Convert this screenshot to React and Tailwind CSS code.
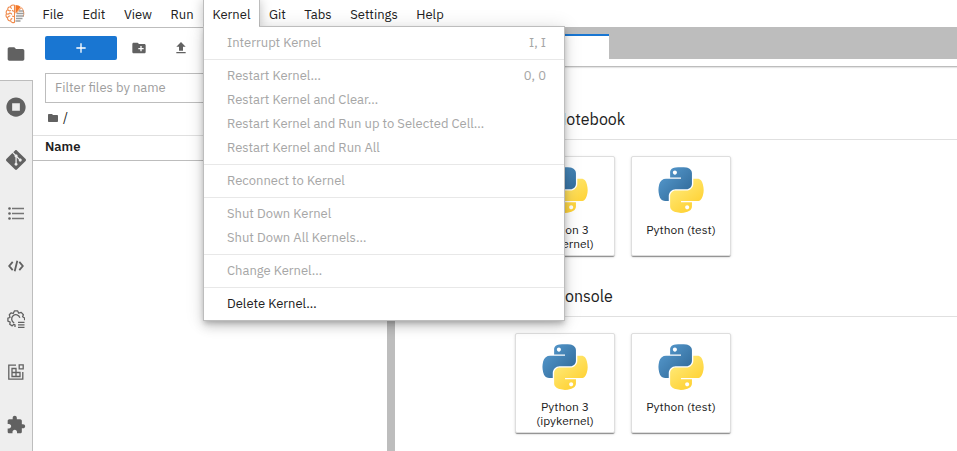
import React from "react";
import { SiGit } from "react-icons/si";

const MENU_ITEMS = [
  { label: "File", width: "w-10" },
  { label: "Edit", width: "w-[42px]" },
  { label: "View", width: "w-[46px]" },
  { label: "Run", width: "w-[42px]" },
  { label: "Kernel", width: "w-[57px]" },
  { label: "Git", width: "w-[35px]" },
  { label: "Tabs", width: "w-[46px]" },
  { label: "Settings", width: "w-[66px]" },
  { label: "Help", width: "w-[46px]" },
];

const KERNEL_MENU = [
  [{ label: "Interrupt Kernel", keys: "I, I" }],
  [
    { label: "Restart Kernel…", keys: "0, 0" },
    { label: "Restart Kernel and Clear…" },
    { label: "Restart Kernel and Run up to Selected Cell…" },
    { label: "Restart Kernel and Run All" },
  ],
  [{ label: "Reconnect to Kernel" }],
  [{ label: "Shut Down Kernel" }, { label: "Shut Down All Kernels…" }],
  [{ label: "Change Kernel…" }],
  [{ label: "Delete Kernel…", enabled: true }],
];

function Icon({ d, className }) {
  return (
    <svg viewBox="0 0 24 24" className={className} fill="currentColor" aria-hidden="true">
      <path d={d} />
    </svg>
  );
}

const FOLDER =
  "M10 4H4c-1.1 0-1.99.9-1.99 2L2 18c0 1.1.9 2 2 2h16c1.1 0 2-.9 2-2V8c0-1.1-.9-2-2-2h-8l-2-2z";
const NEW_FOLDER =
  "M20 6h-8l-2-2H4c-1.11 0-1.99.89-1.99 2L2 18c0 1.11.89 2 2 2h16c1.11 0 2-.89 2-2V8c0-1.11-.89-2-2-2zm-1 8h-3v3h-2v-3h-3v-2h3V9h2v3h3v2z";
const UPLOAD = "M5 20h14v-2H5v2zM5 10h4v6h6v-6h4l-7-7-7 7z";
const RUNNING =
  "M12 1.500C6.200 1.500 1.500 6.200 1.500 12S6.200 22.500 12 22.500 22.500 17.800 22.500 12 17.800 1.500 12 1.500zm4.200 14.700H7.800V7.800h8.400v8.400z";
const PUZZLE =
  "M20.5 11H19V7c0-1.1-.9-2-2-2h-4V3.5C13 2.12 11.88 1 10.5 1S8 2.12 8 3.5V5H4c-1.1 0-1.99.9-1.99 2v3.8H3.5c1.49 0 2.7 1.21 2.7 2.7s-1.21 2.7-2.7 2.7H2V20c0 1.1.9 2 2 2h3.8v-1.500c0-1.49 1.21-2.7 2.7-2.7 1.49 0 2.7 1.21 2.7 2.7V22H17c1.1 0 2-.9 2-2v-4h1.500c1.38 0 2.5-1.12 2.5-2.5S21.88 11 20.500 11z";

function ListIcon() {
  return (
    <svg viewBox="0 0 16 14" className="h-3.5 w-4" aria-hidden="true">
      <g fill="#616161">
        <circle cx="1.500" cy="2.500" r="1.300" />
        <circle cx="1.500" cy="7.500" r="1.300" />
        <circle cx="1.500" cy="12.500" r="1.300" />
      </g>
      <path d="M4 2.500h12M4 7.500h12M4 12.500h12" stroke="#757575" strokeWidth="1.600" />
    </svg>
  );
}

function CodeIcon() {
  return (
    <svg viewBox="0 0 16 12" className="h-3 w-4" fill="none" stroke="#616161" strokeWidth="1.800" aria-hidden="true">
      <path d="M4.700 1.800 1.200 6l3.500 4.200M11.300 1.800 14.800 6l-3.500 4.200M9.300.8 6.700 11.200" />
    </svg>
  );
}

function GearListIcon() {
  return (
    <svg viewBox="0 0 18 18" className="size-[18px]" fill="none" stroke="#616161" strokeWidth="1.300" aria-hidden="true">
      <path
        d="M8 17v-2.200L6.800 14.300 5.200 15.900 2.700 14.300 3.200 12.200.900 11.200V8.200L3 7.500 2.300 4.700 4.200 2.800 6.200 3.500 7.400.900h3.300l1 2.300 2.500-.8 2.200 2.300-.8 2.100 2 1.200v2.300"
        strokeLinejoin="round"
      />
      <path d="M7.200 12.800a4.200 4.200 0 1 1 5.700-5" />
      <path d="M11 12.300h6.500M11 14.800h6.500M11 17.300h6.500" strokeWidth="1.300" />
    </svg>
  );
}

function WidgetsIcon() {
  return (
    <svg viewBox="0 0 16 16" className="size-4" fill="none" stroke="#616161" strokeWidth="1.300" aria-hidden="true">
      <path d="M8 1.200H.8v14h14V8" />
      <path d="M11.200.8h4v4h-4z" />
      <path d="M4 4.500h4v8H4zM4 8.500h8v4H4zM8 8.500v4" />
    </svg>
  );
}

function JupyterMark() {
  return (
    <svg viewBox="0 0 20 20" className="size-5" fill="none" aria-hidden="true">
      <path
        d="M9.500 1.300C7.500.6 5.800 1.400 5.400 2.800 3.500 2.700 2.400 4.300 2.900 5.800 1.300 6.500.7 8.300 1.500 9.800.5 11.300 1 13.300 2.500 14c0 1.900 1.500 3.100 3.100 2.900.7 1.600 2.500 2.200 3.900 1.300zM5.400 2.800c.1 1 .7 1.600 1.600 1.700M2.900 5.800c.7 1 2 1.200 3 .6M1.500 9.800c1.200.6 2.400.3 3.200-.7 1-.1 1.900.4 2.200 1.400M2.500 14c.3-1.400 1.500-2.200 2.800-2M5.600 16.900c-.1-1.200.6-2.200 1.700-2.500M9.500 7.200C8.300 7.400 7.500 6.900 7.200 6M9.500 12.500c-1 .2-1.700 0-2.200-.6"
        stroke="#f08a4b"
        strokeWidth="1.100"
      />
      <path d="M10.500 9.500V1c2.200 0 4 .7 5.300 2z" fill="#f37726" />
      <path d="M11.500 9 16.500 3.700c2.400 2.600 2.900 6 1.600 9" stroke="#f08a4b" strokeWidth="1" />
      <path d="M14 7h4.500M11.500 9.500h7.500M11 12h7.800M11 14.500h6.500M10.500 17h5" stroke="#9e9e9e" strokeWidth="1.300" />
    </svg>
  );
}

function PythonLogo({ id }) {
  return (
    <svg viewBox="5 6 112 113" className="size-[46px]" aria-hidden="true">
      <defs>
        <linearGradient id={id + "-blue"} x1="0" y1="0" x2="0.900" y2="0.900">
          <stop offset="0" stopColor="#5a9fd4" />
          <stop offset="1" stopColor="#306998" />
        </linearGradient>
        <linearGradient id={id + "-gold"} x1="0.200" y1="0.200" x2="0.650" y2="0.800">
          <stop offset="0" stopColor="#ffe873" />
          <stop offset="1" stopColor="#ffd43b" />
        </linearGradient>
      </defs>
      <path
        fill={`url(#${id}-blue)`}
        d="M60.510 6.398C55.927 6.419 51.549 6.810 47.698 7.492 36.351 9.496 34.291 13.692 34.291 21.429V31.648H61.104V35.054H24.229C16.436 35.054 9.613 39.738 7.479 48.648 5.017 58.861 4.908 65.234 7.479 75.898 9.385 83.836 13.936 89.492 21.729 89.492H30.948V77.242C30.948 68.392 38.605 60.585 47.698 60.585H74.479C81.934 60.585 87.885 54.447 87.885 46.960V21.429C87.885 14.163 81.755 8.704 74.479 7.492 69.873 6.725 65.094 6.377 60.510 6.398zM46.010 14.617C48.780 14.617 51.041 16.915 51.041 19.742 51.041 22.558 48.780 24.835 46.010 24.835 43.231 24.835 40.979 22.558 40.979 19.742 40.979 16.915 43.231 14.617 46.010 14.617z"
      />
      <path
        fill={`url(#${id}-gold)`}
        d="M91.229 35.054V46.960C91.229 56.191 83.403 63.960 74.479 63.960H47.698C40.362 63.960 34.291 70.239 34.291 77.585V103.117C34.291 110.383 40.610 114.657 47.698 116.742 56.185 119.237 64.324 119.688 74.479 116.742 81.229 114.787 87.885 110.854 87.885 103.117V92.898H61.104V89.492H101.291C109.084 89.492 111.988 84.056 114.698 75.898 117.497 67.499 117.378 59.422 114.698 48.648 112.772 40.891 109.094 35.054 101.291 35.054zM76.166 99.710C78.946 99.710 81.198 101.988 81.198 104.804 81.198 107.631 78.946 109.929 76.166 109.929 73.397 109.929 71.135 107.631 71.135 104.804 71.135 101.988 73.397 99.710 76.166 99.710z"
      />
    </svg>
  );
}

function KernelMenu() {
  return (
    <div
      role="menu"
      aria-label="Kernel"
      className="absolute -left-px top-[26px] w-[362px] border border-[#bdbdbd] bg-white py-1 shadow-[0_3px_5px_-1px_rgba(0,0,0,0.2),0_6px_10px_rgba(0,0,0,0.14),0_1px_18px_rgba(0,0,0,0.12)]"
    >
      {KERNEL_MENU.map((group, index) => (
        <div key={group[0].label}>
          {index > 0 && <hr className="my-1 border-[#e8e8e8]" />}
          {group.map((item) => (
            <button
              key={item.label}
              type="button"
              role="menuitem"
              disabled={!item.enabled}
              className="flex h-6 w-full items-center justify-between pr-[18px] pl-[23px] text-[#212121] disabled:text-[#a6a6a6]"
            >
              <span>{item.label}</span>
              {item.keys && <span>{item.keys}</span>}
            </button>
          ))}
        </div>
      ))}
    </div>
  );
}

function MenuBar() {
  return (
    <header className="relative z-10 flex h-7 shrink-0 border-b border-[#bdbdbd]">
      <div className="flex w-[33px] items-center pl-[5px]">
        <JupyterMark />
      </div>
      <nav className="flex">
        {MENU_ITEMS.map(({ label, width }) =>
          label === "Kernel" ? (
            <div
              key={label}
              className={`${width} relative h-7 border-x border-[#bdbdbd] shadow-[0_0_12px_rgba(0,0,0,0.25)]`}
            >
              <KernelMenu />
              <button
                type="button"
                aria-expanded="true"
                className="relative h-7 w-full bg-white pt-0.5 text-center text-[#212121]"
              >
                {label}
              </button>
            </div>
          ) : (
            <button key={label} type="button" className={`${width} h-7 pt-0.5 text-center text-[#212121]`}>
              {label}
            </button>
          )
        )}
      </nav>
    </header>
  );
}

const SIDE_TABS = [
  { label: "Running Terminals and Kernels", icon: <Icon d={RUNNING} className="size-[22px]" /> },
  { label: "Git", icon: <SiGit className="size-5" /> },
  { label: "Table of Contents", icon: <ListIcon /> },
  { label: "Code Snippets", icon: <CodeIcon /> },
  { label: "Property Inspector", icon: <GearListIcon /> },
  { label: "Elements", icon: <WidgetsIcon /> },
  { label: "Extension Manager", icon: <Icon d={PUZZLE} className="size-5" /> },
];

function SideBar() {
  return (
    <aside className="flex w-[33px] shrink-0 flex-col overflow-hidden bg-[#eeeeee] text-[#616161]">
      <button
        type="button"
        aria-label="File Browser"
        className="relative -mb-px flex h-[53px] shrink-0 items-center justify-center border-b border-[#bdbdbd] bg-white pr-px"
      >
        <Icon d={FOLDER} className="size-5" />
      </button>
      <div className="flex-1 border-r border-[#bdbdbd]">
        {SIDE_TABS.map((tab) => (
          <button
            key={tab.label}
            type="button"
            aria-label={tab.label}
            className="flex h-[53px] w-full items-center justify-center"
          >
            {tab.icon}
          </button>
        ))}
      </div>
    </aside>
  );
}

function FileBrowser() {
  return (
    <section className="w-[354px] shrink-0">
      <div className="flex items-center px-3 pt-2">
        <button
          type="button"
          aria-label="New Launcher"
          className="flex h-6 w-[72px] items-center justify-center rounded-xs bg-[#1976d2] text-white"
        >
          <Icon d="M19 13h-6v6h-2v-6H5v-2h6V5h2v6h6v2z" className="size-4" />
        </button>
        <button type="button" aria-label="New Folder" className="ml-3.5 text-[#616161]">
          <Icon d={NEW_FOLDER} className="size-4" />
        </button>
        <button type="button" aria-label="Upload Files" className="ml-[26px] text-[#616161]">
          <Icon d={UPLOAD} className="size-4" />
        </button>
      </div>
      <div className="px-3 pt-[13px]">
        <input
          type="text"
          aria-label="Filter files by name"
          placeholder="Filter files by name"
          className="h-[30px] w-full border border-[#bdbdbd] px-[9px] pb-0.5 placeholder:text-[#9e9e9e]"
        />
      </div>
      <div className="flex h-8 items-center gap-1 px-3.5 pb-0.5">
        <Icon d={FOLDER} className="size-3 text-[#616161]" />
        <span>/</span>
      </div>
      <div className="h-[26px] border-t border-b border-t-[#e0e0e0] border-b-[#bdbdbd] px-3 leading-[22px] font-semibold">
        Name
      </div>
    </section>
  );
}

function LauncherSection({ title }) {
  return (
    <section>
      <h2 className="flex h-10 items-center border-b border-[#e0e0e0] pb-0.5 pl-10 text-base text-[#212121]">
        {title}
      </h2>
      <div className="flex gap-4 pt-4 pb-[21px]">
        {["Python 3 (ipykernel)", "Python (test)"].map((name, index) => (
          <button
            key={name}
            type="button"
            className="flex size-[100px] flex-col items-center rounded-xs border border-[#dedede] bg-white pt-[10px] text-xs leading-[14px] shadow-[0_2px_1px_-1px_rgba(0,0,0,0.3),0_1px_1px_rgba(0,0,0,0.14),0_1px_3px_rgba(0,0,0,0.12)]"
          >
            <PythonLogo id={`${title}-${index}`} />
            <span className="w-[90px] pt-[10px]">{name}</span>
          </button>
        ))}
      </div>
    </section>
  );
}

export default function App() {
  return (
    <div className="flex h-screen flex-col overflow-hidden bg-white font-['IBM_Plex_Sans','Noto_Sans',sans-serif] text-[13px] text-[#212121]">
      <MenuBar />
      <div className="flex min-h-0 flex-1">
        <SideBar />
        <FileBrowser />
        <div className="w-2 shrink-0 bg-[#bdbdbd]" />
        <main className="min-w-0 flex-1">
          <div className="flex h-[31px] items-end bg-[#bdbdbd]">
            <button
              type="button"
              className="h-[25px] w-[214px] border-t-2 border-[#1976d2] bg-white"
              aria-label="Launcher"
            />
          </div>
          <div className="h-2 border-b border-[#bdbdbd] shadow-[0_1px_1px_rgba(0,0,0,0.1)]" />
          <div className="pt-[33px] pl-[120px]">
            <LauncherSection title="Notebook" />
            <LauncherSection title="Console" />
          </div>
        </main>
      </div>
    </div>
  );
}
